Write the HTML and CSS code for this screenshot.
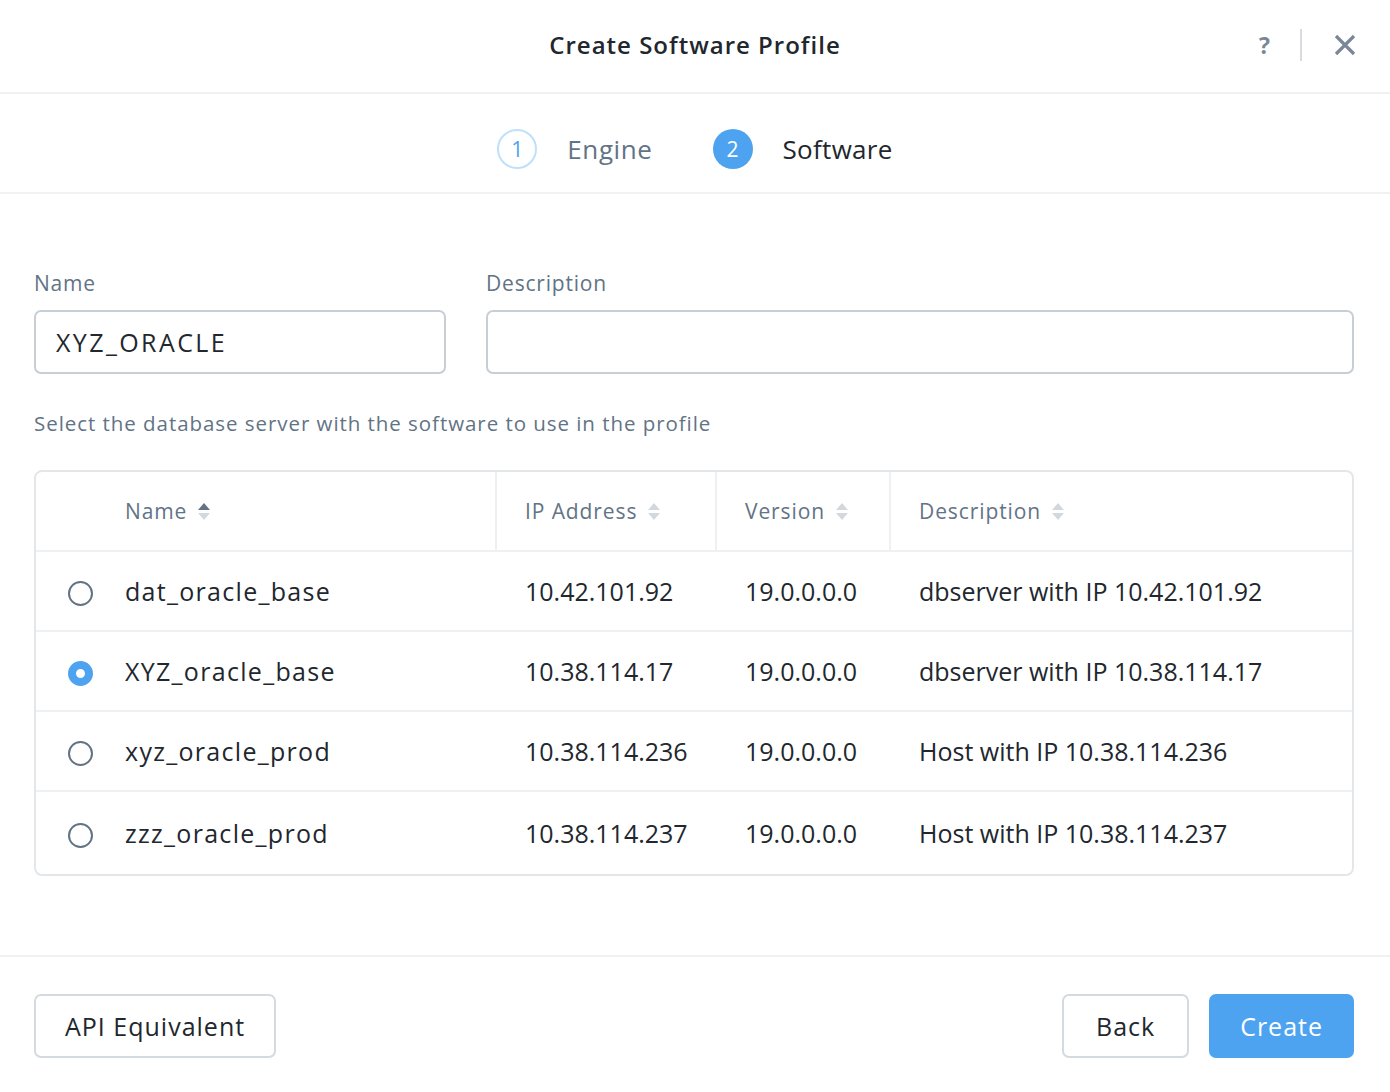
FILE: index.html
```html
<!DOCTYPE html>
<html lang="en">
<head>
<meta charset="utf-8">
<title>Create Software Profile</title>
<link rel="stylesheet" href="styles.css">
</head>
<body>
<div class="modal">
  <header class="modal-header">
    <div></div>
    <h1 class="title">Create Software Profile</h1>
    <div class="header-actions">
      <span class="help">?</span>
      <span class="vsep"></span>
      <svg class="close" width="22" height="22" viewBox="0 0 22 22"><path d="M2 2 L20 20 M20 2 L2 20" stroke="#7b8796" stroke-width="3.2" stroke-linecap="butt"/></svg>
    </div>
  </header>

  <nav class="stepper">
    <div class="step done"><span class="step-num">1</span><span class="step-label">Engine</span></div>
    <div class="step active"><span class="step-num">2</span><span class="step-label">Software</span></div>
  </nav>

  <main class="body">
    <div class="fields">
      <div class="field field-name">
        <label class="label">Name</label>
        <div class="input name-value">XYZ_ORACLE</div>
      </div>
      <div class="field field-desc">
        <label class="label">Description</label>
        <div class="input"></div>
      </div>
    </div>

    <p class="hint">Select the database server with the software to use in the profile</p>

    <div class="table">
      <div class="row head">
        <div class="cell c-radio"></div>
        <div class="cell c-name">Name <span class="sort asc"><i class="up"></i><i class="down"></i></span></div>
        <div class="cell c-ip">IP Address <span class="sort"><i class="up"></i><i class="down"></i></span></div>
        <div class="cell c-ver">Version <span class="sort"><i class="up"></i><i class="down"></i></span></div>
        <div class="cell c-desc">Description <span class="sort"><i class="up"></i><i class="down"></i></span></div>
      </div>
      <div class="row">
        <div class="cell c-radio"><span class="radio"></span></div>
        <div class="cell c-name">dat_oracle_base</div>
        <div class="cell c-ip">10.42.101.92</div>
        <div class="cell c-ver">19.0.0.0.0</div>
        <div class="cell c-desc">dbserver with IP 10.42.101.92</div>
      </div>
      <div class="row">
        <div class="cell c-radio"><span class="radio checked"></span></div>
        <div class="cell c-name">XYZ_oracle_base</div>
        <div class="cell c-ip">10.38.114.17</div>
        <div class="cell c-ver">19.0.0.0.0</div>
        <div class="cell c-desc">dbserver with IP 10.38.114.17</div>
      </div>
      <div class="row">
        <div class="cell c-radio"><span class="radio"></span></div>
        <div class="cell c-name">xyz_oracle_prod</div>
        <div class="cell c-ip">10.38.114.236</div>
        <div class="cell c-ver">19.0.0.0.0</div>
        <div class="cell c-desc">Host with IP 10.38.114.236</div>
      </div>
      <div class="row last">
        <div class="cell c-radio"><span class="radio"></span></div>
        <div class="cell c-name">zzz_oracle_prod</div>
        <div class="cell c-ip">10.38.114.237</div>
        <div class="cell c-ver">19.0.0.0.0</div>
        <div class="cell c-desc">Host with IP 10.38.114.237</div>
      </div>
    </div>
  </main>

  <footer class="modal-footer">
    <button class="btn btn-api">API Equivalent</button>
    <div class="footer-right">
      <button class="btn btn-back">Back</button>
      <button class="btn primary">Create</button>
    </div>
  </footer>
</div>
</body>
</html>
```

FILE: styles.css
```css
* { box-sizing: border-box; }
html, body { margin: 0; padding: 0; background: #fff; }
body {
  font-family: "Open Sans", "Lato", sans-serif;
  color: #22272e;
  width: 1390px;
  height: 1092px;
  overflow: hidden;
}

.modal-header {
  height: 94px;
  border-bottom: 2px solid #f0f1f2;
  display: grid;
  grid-template-columns: 1fr auto 1fr;
  align-items: center;
  padding: 0 34px 2px 34px;
}
.title {
  margin: 0;
  font-size: 24px;
  font-weight: 600;
  color: #22272e;
  line-height: 30px;
  letter-spacing: 1px;
}
.header-actions {
  display: flex;
  align-items: center;
  justify-content: flex-end;
}
.help {
  font-size: 23px;
  font-weight: 700;
  color: #7b8796;
  margin-right: 30px;
}
.vsep {
  width: 2px;
  height: 32px;
  background: #d8dce1;
  margin-right: 32px;
}
.close { display: block; }

.stepper {
  height: 100px;
  border-bottom: 2px solid #f0f1f2;
  display: flex;
  justify-content: center;
  align-items: center;
  gap: 60px;
  padding: 12px 0 0 0;
}
.step { display: flex; align-items: center; gap: 30px; }
.step-num {
  width: 40px; height: 40px;
  border-radius: 50%;
  display: flex; align-items: center; justify-content: center;
  font-size: 21px;
}
.step-label { font-size: 26px; line-height: 34px; letter-spacing: 0.6px; }
.step.done .step-num { border: 2px solid #bfe0fa; color: #4da3f0; }
.step.done .step-label { color: #627386; }
.step.active .step-num { background: #4da3f0; color: #fff; }
.step.active .step-label { color: #22272e; letter-spacing: 0.3px; }

.body { padding: 74px 36px 0 34px; }
.fields { display: flex; gap: 40px; }
.field-name { width: 412px; }
.field-desc { flex: 1; }
.label {
  display: block;
  font-size: 21px;
  color: #627386;
  line-height: 30px;
  margin-bottom: 12px;
  letter-spacing: 0.8px;
}
.input {
  height: 64px;
  border: 2px solid #c8ced5;
  border-radius: 7px;
  padding: 0 20px;
  font-size: 25px;
  display: flex;
  align-items: center;
  color: #22272e;
}
.name-value { letter-spacing: 2.4px; }
.hint {
  margin: 34px 0 32px 0;
  font-size: 20.5px;
  color: #627386;
  line-height: 30px;
  letter-spacing: 0.95px;
}

.table {
  border: 2px solid #e4e7ea;
  border-radius: 8px;
}
.row {
  display: flex;
  height: 80px;
  border-bottom: 2px solid #eff0f1;
}
.row.last { border-bottom: none; height: 82px; }
.row.head { height: 80px; }
.cell {
  display: flex;
  align-items: center;
  font-size: 25px;
  color: #22272e;
}
.head .cell { font-size: 21px; color: #627386; letter-spacing: 0.9px; }
.c-radio { width: 89px; justify-content: center; }
.c-name { width: 370px; letter-spacing: 1.3px; }
.c-ip { width: 220px; padding-left: 30px; }
.c-ver { width: 174px; padding-left: 30px; }
.c-desc { flex: 1; padding-left: 30px; }
.head .c-ip, .head .c-ver, .head .c-desc { border-left: 2px solid #eff0f1; padding-left: 28px; }
.row:not(.head) .c-radio { padding-top: 4px; }

.sort {
  display: inline-flex;
  flex-direction: column;
  gap: 3px;
  margin-left: 11px;
}
.sort i {
  display: block;
  width: 0; height: 0;
  border-left: 6px solid transparent;
  border-right: 6px solid transparent;
}
.sort .up { border-bottom: 7px solid #d3d8de; }
.sort .down { border-top: 7px solid #d3d8de; }
.sort.asc .up { border-bottom-color: #627386; }

.radio {
  width: 25px; height: 25px;
  border-radius: 50%;
  border: 2px solid #627386;
  display: block;
}
.radio.checked {
  border: 8px solid #4da3f0;
  background: #fff;
}

.modal-footer {
  margin-top: 79px;
  border-top: 2px solid #f0f1f2;
  padding: 37px 36px 0 34px;
  display: flex;
  justify-content: space-between;
}
.footer-right { display: flex; gap: 20px; }
.btn {
  height: 64px;
  border: 2px solid #d5dae0;
  border-radius: 7px;
  background: #fff;
  font-family: "Open Sans", "Lato", sans-serif;
  font-size: 25px;
  color: #22272e;
  padding: 0 29px;
  letter-spacing: 1px;
}
.btn-back { padding: 0 32px; }
.btn.primary {
  background: #4da3f0;
  border-color: #4da3f0;
  color: #fff;
}
```
